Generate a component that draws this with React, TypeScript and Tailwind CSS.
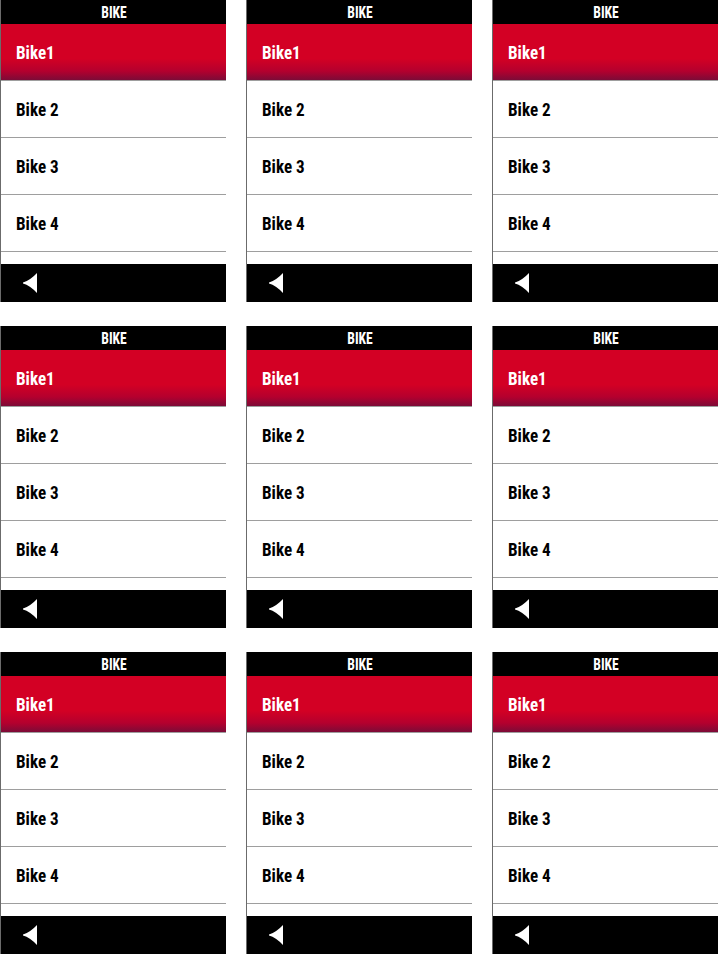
const BIKES = ["Bike1", "Bike 2", "Bike 3", "Bike 4"];

function BackIcon() {
  return (
    <svg width="14" height="20" viewBox="0 0 14 20" className="block">
      <path d="M14 0 L14 20 Q7 12.5 0 10.5 L0 9.5 Q7 7.5 14 0 Z" fill="#fff" />
    </svg>
  );
}

function BikeScreen() {
  return (
    <div className="flex h-[302px] flex-col border-l border-[#6b6b6b] bg-white">
      <div className="flex h-6 items-center justify-center bg-black pt-px text-[16px] font-bold leading-none text-white">
        <span className="inline-block scale-x-[0.85]">BIKE</span>
      </div>
      {BIKES.map((name, i) => (
        <div
          key={name}
          className={
            i === 0
              ? "flex h-[57px] items-center border-b border-[#9e9e9e] bg-[linear-gradient(to_bottom,#d30024_0%,#d30024_62%,#b4002e_84%,#7c0b37_100%)] pt-[2px] pl-[15px] text-[19px] font-bold text-white"
              : "flex h-[57px] items-center border-b border-[#9e9e9e] pt-[2px] pl-[15px] text-[19px] font-bold text-black"
          }
        >
          <span className="inline-block origin-left scale-x-[0.9]">{name}</span>
        </div>
      ))}
      <div className="mt-auto flex h-[38px] items-center bg-black pl-[22px]">
        <BackIcon />
      </div>
    </div>
  );
}

export default function App() {
  return (
    <div
      className="grid h-[954px] w-[718px] grid-cols-3 grid-rows-3 gap-x-5 gap-y-6 bg-white"
      style={{
        fontFamily:
          '"Roboto Condensed", "Liberation Sans Narrow", "DejaVu Sans Condensed", Roboto, sans-serif',
        fontStretch: "condensed",
      }}
    >
      {Array.from({ length: 9 }).map((_, i) => (
        <BikeScreen key={i} />
      ))}
    </div>
  );
}
